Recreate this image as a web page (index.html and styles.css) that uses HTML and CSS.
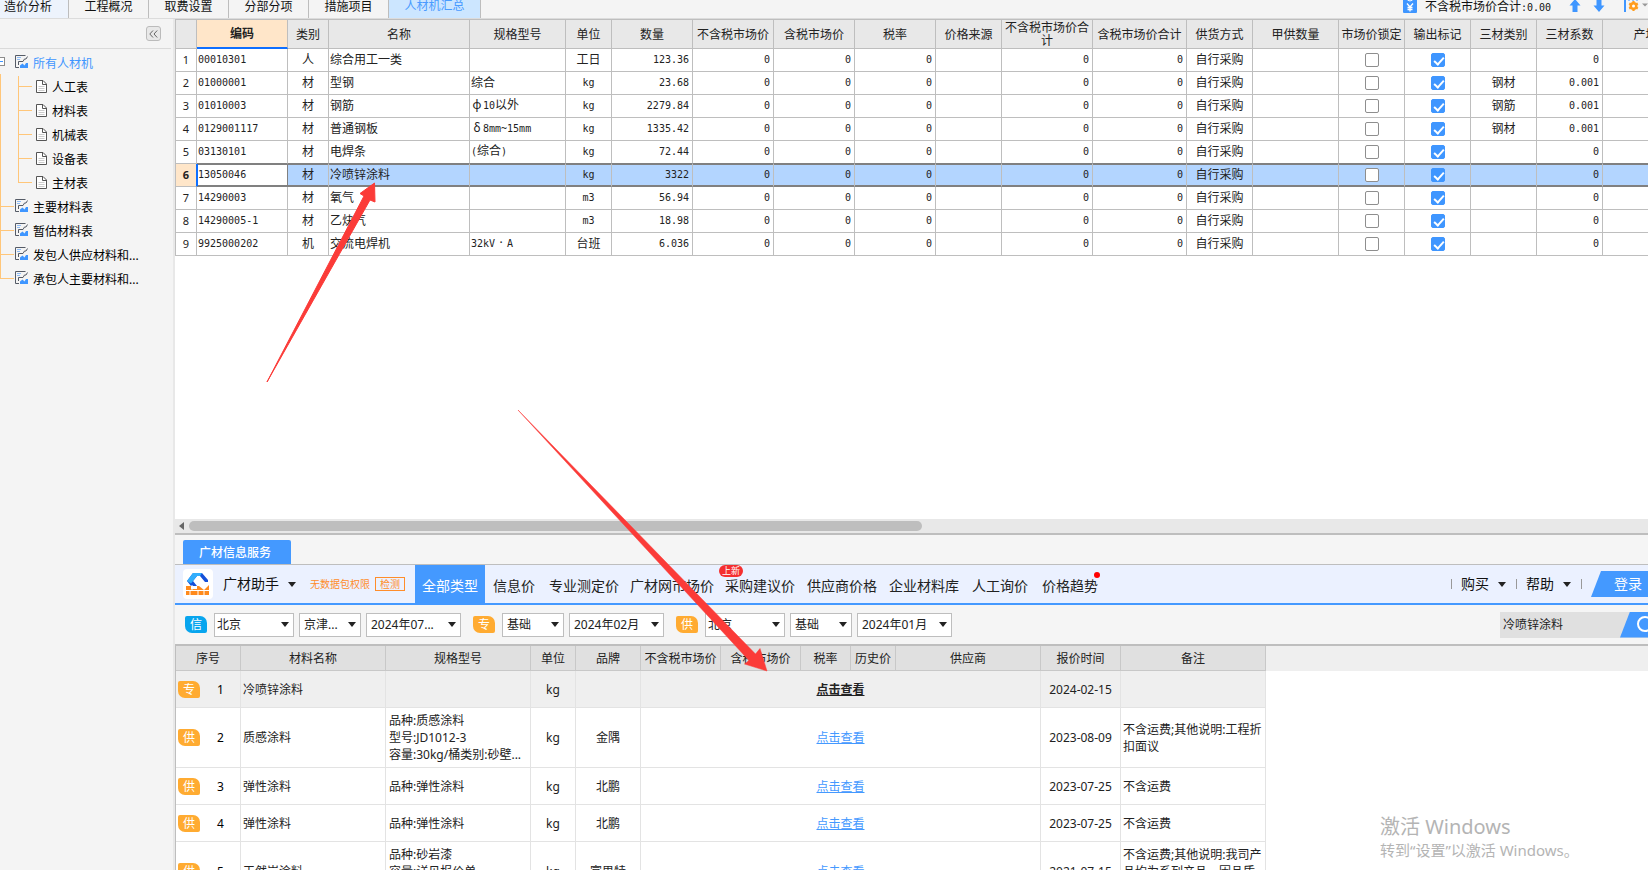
FILE: index.html
```html
<!DOCTYPE html>
<html lang="zh-CN">
<head>
<meta charset="utf-8">
<title>人材机汇总</title>
<link rel="stylesheet" href="styles.css">
</head>
<body>
<svg class="defs" width="0" height="0" aria-hidden="true">
  <symbol id="i-sheet" viewBox="0 0 14 14">
    <path d="M10.500 .5H.5V12.500H4" fill="none" stroke="#555b66"/>
    <path d="M2 2.500H6M2 4.500H5" stroke="#8fbcf5"/>
    <path d="M3.500 10V6.500H8L9.500 4H11L12.500 1.500" fill="none" stroke="#555b66"/>
    <path d="M5 13V10.500L7.500 8.500 9.500 10.500 11 8H13V13Z" fill="#3f96ff"/>
  </symbol>
  <symbol id="i-doc" viewBox="0 0 11 13">
    <path d="M.5 .5H7L10.500 4V12.500H.5Z" fill="#fff" stroke="#555"/>
    <path d="M6.500 .5V4.500H10.500" fill="none" stroke="#555"/>
    <path d="M2.500 6.500H8.500M2.500 8.500H8.500M2.500 10.500H8.500" stroke="#ccc"/>
  </symbol>
</svg>

<header class="topbar">
  <nav class="tabs">
    <button class="tab tab-first">造价分析</button>
    <button class="tab">工程概况</button>
    <button class="tab">取费设置</button>
    <button class="tab">分部分项</button>
    <button class="tab">措施项目</button>
    <button class="tab tab-active">人材机汇总</button>
  </nav>
  <div class="summary">
    <svg width="14" height="13" viewBox="0 0 14 13"><rect y="-3" width="14" height="16" rx="1" fill="#3f96ff"/><path d="M4.500 0Q7 2 9.500 0" fill="none" stroke="#fff"/><path d="M4 3.500 7 7 10 3.500M7 7V11.500M4.500 7.500H9.500M4.500 9.500H9.500" fill="none" stroke="#fff" stroke-width="1.300"/></svg>
    <span class="total">不含税市场价合计<span class="mono">:0.00</span></span>
    <button class="tool" aria-label="上移"><svg width="12" height="13" viewBox="0 0 12 13"><path d="M6-1 11.500 5.500H8.500V12H3.500V5.500H.5Z" fill="#3f96ff"/></svg></button>
    <button class="tool" aria-label="下移"><svg width="12" height="13" viewBox="0 0 12 13"><path d="M3.500 0H8.500V5.500H11.500L6 12 .5 5.500H3.500Z" fill="#3f96ff"/></svg></button>
    <button class="tool tool-set" aria-label="设置"><svg width="24" height="13" viewBox="0 0 24 13"><path d="M1 0V12" stroke="#3f96ff" stroke-width="2"/><path d="M4 0H14" stroke="#3f96ff" stroke-dasharray="2 2"/><circle cx="9.500" cy="6" r="4" fill="#ff9d1e"/><path d="M9.500 1V11M5.200 3.500 13.800 8.500M13.800 3.500 5.200 8.500" stroke="#ff9d1e" stroke-width="2.200"/><circle cx="9.500" cy="6" r="1.500" fill="#fff"/><path d="M18 3.500H24L21 6.500Z" fill="#999"/></svg></button>
  </div>
</header>

<main class="work">
<aside class="side">
  <div class="side-head"><button class="fold" aria-label="收起"><svg width="9" height="8" viewBox="0 0 9 8"><path d="M4 .5.800 4 4 7.500M8.200.5 5 4 8.200 7.500" fill="none" stroke="#666"/></svg></button></div>
  <ul class="tree">
    <li class="root open"><span class="minus"></span><a href="#" class="node current"><svg width="14" height="14"><use href="#i-sheet"/></svg>所有人材机</a>
      <ul class="kids">
        <li><a href="#" class="node"><svg width="11" height="13"><use href="#i-doc"/></svg>人工表</a></li>
        <li><a href="#" class="node"><svg width="11" height="13"><use href="#i-doc"/></svg>材料表</a></li>
        <li><a href="#" class="node"><svg width="11" height="13"><use href="#i-doc"/></svg>机械表</a></li>
        <li><a href="#" class="node"><svg width="11" height="13"><use href="#i-doc"/></svg>设备表</a></li>
        <li><a href="#" class="node"><svg width="11" height="13"><use href="#i-doc"/></svg>主材表</a></li>
      </ul>
    </li>
    <li class="root"><a href="#" class="node"><svg width="14" height="14"><use href="#i-sheet"/></svg>主要材料表</a></li>
    <li class="root"><a href="#" class="node"><svg width="14" height="14"><use href="#i-sheet"/></svg>暂估材料表</a></li>
    <li class="root"><a href="#" class="node"><svg width="14" height="14"><use href="#i-sheet"/></svg>发包人供应材料和...</a></li>
    <li class="root"><a href="#" class="node"><svg width="14" height="14"><use href="#i-sheet"/></svg>承包人主要材料和...</a></li>
  </ul>
</aside>

<div class="content">
<section class="sheet">
<table class="grid">
<colgroup><col class="w21"><col class="w91"><col class="w41"><col class="w141"><col class="w96"><col class="w46"><col class="w81"><col class="w81"><col class="w81"><col class="w81"><col class="w66"><col class="w91"><col class="w94"><col class="w66"><col class="w86"><col class="w66"><col class="w66"><col class="w66"><col class="w66"><col class="w86"></colgroup>
<thead><tr><th></th><th class="sorted">编码</th><th>类别</th><th>名称</th><th>规格型号</th><th>单位</th><th>数量</th><th>不含税市场价</th><th>含税市场价</th><th>税率</th><th>价格来源</th><th>不含税市场价合计</th><th>含税市场价合计</th><th>供货方式</th><th>甲供数量</th><th>市场价锁定</th><th>输出标记</th><th>三材类别</th><th>三材系数</th><th>产地</th></tr></thead>
<tbody>
<tr><th>1</th><td class="m">00010301</td><td class="c">人</td><td>综合用工一类</td><td></td><td class="c">工日</td><td class="n">123.36</td><td class="n">0</td><td class="n">0</td><td class="n">0</td><td></td><td class="n">0</td><td class="n">0</td><td class="c">自行采购</td><td></td><td class="c"><input type="checkbox" aria-label="市场价锁定 1"></td><td class="c"><input type="checkbox" checked aria-label="输出标记 1"></td><td class="c"></td><td class="n">0</td><td></td></tr>
<tr><th>2</th><td class="m">01000001</td><td class="c">材</td><td>型钢</td><td>综合</td><td class="c mono">kg</td><td class="n">23.68</td><td class="n">0</td><td class="n">0</td><td class="n">0</td><td></td><td class="n">0</td><td class="n">0</td><td class="c">自行采购</td><td></td><td class="c"><input type="checkbox" aria-label="市场价锁定 2"></td><td class="c"><input type="checkbox" checked aria-label="输出标记 2"></td><td class="c">钢材</td><td class="n">0.001</td><td></td></tr>
<tr><th>3</th><td class="m">01010003</td><td class="c">材</td><td>钢筋</td><td><span class="wide">ф</span><span class="mono">10</span>以外</td><td class="c mono">kg</td><td class="n">2279.84</td><td class="n">0</td><td class="n">0</td><td class="n">0</td><td></td><td class="n">0</td><td class="n">0</td><td class="c">自行采购</td><td></td><td class="c"><input type="checkbox" aria-label="市场价锁定 3"></td><td class="c"><input type="checkbox" checked aria-label="输出标记 3"></td><td class="c">钢筋</td><td class="n">0.001</td><td></td></tr>
<tr><th>4</th><td class="m">0129001117</td><td class="c">材</td><td>普通钢板</td><td><span class="wide">δ</span><span class="mono">8mm~15mm</span></td><td class="c mono">kg</td><td class="n">1335.42</td><td class="n">0</td><td class="n">0</td><td class="n">0</td><td></td><td class="n">0</td><td class="n">0</td><td class="c">自行采购</td><td></td><td class="c"><input type="checkbox" aria-label="市场价锁定 4"></td><td class="c"><input type="checkbox" checked aria-label="输出标记 4"></td><td class="c">钢材</td><td class="n">0.001</td><td></td></tr>
<tr class="before"><th>5</th><td class="m">03130101</td><td class="c">材</td><td>电焊条</td><td><span class="mono">(</span>综合<span class="mono">)</span></td><td class="c mono">kg</td><td class="n">72.44</td><td class="n">0</td><td class="n">0</td><td class="n">0</td><td></td><td class="n">0</td><td class="n">0</td><td class="c">自行采购</td><td></td><td class="c"><input type="checkbox" aria-label="市场价锁定 5"></td><td class="c"><input type="checkbox" checked aria-label="输出标记 5"></td><td class="c"></td><td class="n">0</td><td></td></tr>
<tr class="selected"><th>6</th><td class="m focus">13050046</td><td class="c">材</td><td>冷喷锌涂料</td><td></td><td class="c mono">kg</td><td class="n">3322</td><td class="n">0</td><td class="n">0</td><td class="n">0</td><td></td><td class="n">0</td><td class="n">0</td><td class="c">自行采购</td><td></td><td class="c"><input type="checkbox" aria-label="市场价锁定 6"></td><td class="c"><input type="checkbox" checked aria-label="输出标记 6"></td><td class="c"></td><td class="n">0</td><td></td></tr>
<tr><th>7</th><td class="m">14290003</td><td class="c">材</td><td>氧气</td><td></td><td class="c mono">m3</td><td class="n">56.94</td><td class="n">0</td><td class="n">0</td><td class="n">0</td><td></td><td class="n">0</td><td class="n">0</td><td class="c">自行采购</td><td></td><td class="c"><input type="checkbox" aria-label="市场价锁定 7"></td><td class="c"><input type="checkbox" checked aria-label="输出标记 7"></td><td class="c"></td><td class="n">0</td><td></td></tr>
<tr><th>8</th><td class="m">14290005-1</td><td class="c">材</td><td>乙炔气</td><td></td><td class="c mono">m3</td><td class="n">18.98</td><td class="n">0</td><td class="n">0</td><td class="n">0</td><td></td><td class="n">0</td><td class="n">0</td><td class="c">自行采购</td><td></td><td class="c"><input type="checkbox" aria-label="市场价锁定 8"></td><td class="c"><input type="checkbox" checked aria-label="输出标记 8"></td><td class="c"></td><td class="n">0</td><td></td></tr>
<tr><th>9</th><td class="m">9925000202</td><td class="c">机</td><td>交流电焊机</td><td><span class="mono">32kV</span><span class="wide">·</span><span class="mono">A</span></td><td class="c">台班</td><td class="n">6.036</td><td class="n">0</td><td class="n">0</td><td class="n">0</td><td></td><td class="n">0</td><td class="n">0</td><td class="c">自行采购</td><td></td><td class="c"><input type="checkbox" aria-label="市场价锁定 9"></td><td class="c"><input type="checkbox" checked aria-label="输出标记 9"></td><td class="c"></td><td class="n">0</td><td></td></tr>
</tbody>
</table>
</section>
<div class="scroll"><svg width="6" height="8" viewBox="0 0 6 8"><path d="M5 0V8L0 4Z" fill="#666"/></svg><div class="track"><div class="thumb"></div></div></div>

<section class="dock">
  <div class="dock-tabs"><button class="dock-tab">广材信息服务</button></div>
  <div class="bar">
    <div class="logo"><svg width="24" height="24" viewBox="0 0 24 24"><path d="M7 1H16L22 8V10H19L14 4H11L7 9 11 14H5L1 9Z" fill="#1550d8"/><path d="M7 1H16L14 4H11L5 11.500 1 9Z" fill="#31aefc"/><path d="M10 10 14 14 18 14 22 10" fill="none" stroke="#1550d8" stroke-width="0"/><path d="M0 14H5V17H11V14H13L18 18 23 13V23H0Z" fill="#ff8a1c"/><path d="M0 18.500H23M6 13V18M4 19V23M12 19V23M18 19V23" stroke="#fff"/></svg></div>
    <button class="menu brand">广材助手<i class="caret"></i></button>
    <span class="notice">无数据包权限</span>
    <button class="check">检测</button>
    <nav class="kinds">
      <a href="#" class="on">全部类型</a><a href="#">信息价</a><a href="#">专业测定价</a><a href="#">广材网市场价</a><a href="#">采购建议价<span class="badge">上新</span></a><a href="#">供应商价格</a><a href="#">企业材料库</a><a href="#">人工询价</a><a href="#">价格趋势<span class="dot"></span></a>
    </nav>
    <div class="account"><button class="menu">购买<i class="caret"></i></button><button class="menu">帮助<i class="caret"></i></button><span class="sep"></span><button class="login">登录</button></div>
  </div>
  <div class="filters">
    <span class="tag tag-blue">信</span>
    <span class="pick p80"><select aria-label="信息价地区"><option>北京</option></select></span>
    <span class="pick p62"><select aria-label="信息价类别"><option>京津...</option></select></span>
    <span class="pick p95"><select aria-label="信息价期数"><option>2024年07...</option></select></span>
    <span class="tag gap">专</span>
    <span class="pick p62"><select aria-label="测定价类别"><option>基础</option></select></span>
    <span class="pick p95"><select aria-label="测定价期数"><option>2024年02月</option></select></span>
    <span class="tag gap">供</span>
    <span class="pick p80"><select aria-label="供应商地区"><option>北京</option></select></span>
    <span class="pick p62"><select aria-label="供应商类别"><option>基础</option></select></span>
    <span class="pick p95"><select aria-label="供应商期数"><option>2024年01月</option></select></span>
    <div class="search"><input type="text" value="冷喷锌涂料" aria-label="搜索材料"><button aria-label="搜索"><svg width="20" height="20" viewBox="0 0 20 20"><circle cx="9" cy="9" r="7" fill="none" stroke="#fff" stroke-width="2"/><path d="m14 14 5 5" stroke="#fff" stroke-width="2"/></svg></button></div>
  </div>
  <div class="list">
  <table class="quotes">
  <colgroup><col class="w65"><col class="w145"><col class="w145"><col class="w45"><col class="w65"><col class="w80"><col class="w80"><col class="w50"><col class="w45"><col class="w145"><col class="w80"><col class="w145"></colgroup>
  <thead><tr><th>序号</th><th>材料名称</th><th>规格型号</th><th>单位</th><th>品牌</th><th>不含税市场价</th><th>含税市场价</th><th>税率</th><th>历史价</th><th>供应商</th><th>报价时间</th><th>备注</th></tr></thead>
  <tbody>
  <tr class="low picked"><td><div class="seq"><span class="tag">专</span><b>1</b></div></td><td>冷喷锌涂料</td><td></td><td class="c">kg</td><td class="c"></td><td class="c" colspan="5"><a href="#">点击查看</a></td><td class="c">2024-02-15</td><td></td></tr>
  <tr class="high"><td><div class="seq"><span class="tag">供</span><b>2</b></div></td><td>质感涂料</td><td>品种:质感涂料<br>型号:JD1012-3<br>容量:30kg/桶类别:砂壁...</td><td class="c">kg</td><td class="c">金隅</td><td class="c" colspan="5"><a href="#">点击查看</a></td><td class="c">2023-08-09</td><td>不含运费;其他说明:工程折扣面议</td></tr>
  <tr class="low"><td><div class="seq"><span class="tag">供</span><b>3</b></div></td><td>弹性涂料</td><td>品种:弹性涂料</td><td class="c">kg</td><td class="c">北鹏</td><td class="c" colspan="5"><a href="#">点击查看</a></td><td class="c">2023-07-25</td><td>不含运费</td></tr>
  <tr class="low"><td><div class="seq"><span class="tag">供</span><b>4</b></div></td><td>弹性涂料</td><td>品种:弹性涂料</td><td class="c">kg</td><td class="c">北鹏</td><td class="c" colspan="5"><a href="#">点击查看</a></td><td class="c">2023-07-25</td><td>不含运费</td></tr>
  <tr class="high"><td><div class="seq"><span class="tag">供</span><b>5</b></div></td><td>天然岩涂料</td><td>品种:砂岩漆<br>容量:详见报价单<br>类别:涂料</td><td class="c">kg</td><td class="c">富思特</td><td class="c" colspan="5"><a href="#">点击查看</a></td><td class="c">2021-07-15</td><td>不含运费;其他说明:我司产品均为系列产品，因品质不同</td></tr>
  </tbody>
  </table>
  </div>
</section>
</div>
</main>

<svg class="arrows" width="1648" height="870" viewBox="0 0 1648 870" aria-hidden="true">
  <path d="M267 382 364 196 360 193.500 374.500 183 375 202 370 200Z" fill="#fb3b38" stroke="#fb3b38"/>
  <path d="M518 410 755.500 654 760 648.500 767 671 744.500 664 749 660.500Z" fill="#fb3b38" stroke="#fb3b38" stroke-width=".5"/>
</svg>
<div class="watermark"><p class="wm-title">激活 Windows</p><p class="wm-sub">转到“设置”以激活 Windows。</p></div>
</body>
</html>
```
FILE: styles.css
```css
* { box-sizing: border-box; }
body {
  margin: 0; height: 100vh; overflow: hidden; position: relative;
  display: flex; flex-direction: column;
  font: 12px/16px "Noto Sans", "Noto Sans CJK SC", sans-serif;
  color: #222; background: #f4f4f4;
}
button, input, select { font: inherit; color: inherit; margin: 0; padding: 0; border: 0; background: none; border-radius: 0; }
a { color: inherit; text-decoration: none; }
ul { list-style: none; margin: 0; padding: 0; }
svg { display: block; flex: none; }
.defs, .arrows { position: absolute; }
.arrows { left: 0; top: 0; pointer-events: none; }
.mono { font-family: "DejaVu Sans Mono", monospace; font-size: 10px; }

/* top bar */
.topbar { display: flex; justify-content: space-between; height: 19px; flex: none; border-bottom: 1px solid #dcdcdc; overflow: hidden; }
.tabs { display: flex; }
.tab { width: 80px; height: 18px; line-height: 14px; padding-bottom: 4px; border-right: 1px solid #bdbdbd; color: #111; flex: none; }
.tab-first { width: 81px; margin-left: -12px; background: #edf3fc; }
.tab-active { width: 92px; background: #cce6ff; color: #4a9bff; padding-bottom: 6px; line-height: 12px; }
.summary { display: flex; align-items: flex-start; }
.total { margin: 0 18px 0 8px; line-height: 13px; color: #111; white-space: nowrap; }
.tool { margin-right: 12px; height: 13px; }
.tool-set { margin: 0 0 0 7px; }

.work { flex: 1; min-height: 0; display: flex; }

/* tree */
.side { width: 175px; flex: none; border-right: 2px solid #e8e8e8; }
.side-head { height: 30px; margin-right: 2px; border-bottom: 1px solid #dadada; display: flex; justify-content: flex-end; padding: 7px 10px 0 0; }
.fold { width: 15px; height: 15px; border: 1px solid #bbb; border-radius: 3px; background: #e8e8e8; display: flex; align-items: center; justify-content: center; }
.tree { padding-top: 3px; }
.node { display: flex; align-items: center; height: 24px; gap: 4px; color: #000; white-space: nowrap; }
.node svg { margin-bottom: 4px; }
.current { color: #3f96ff; }
.root { position: relative; padding-left: 15px; }
.root::before { content: ""; position: absolute; left: 0; top: 0; width: 13px; height: 10px; border-left: 1px solid #ffc679; border-bottom: 1px solid #ffc679; }
.root::after { content: ""; position: absolute; left: 0; top: 0; height: 24px; border-left: 1px solid #ffc679; }
.root:last-child::after { height: 10px; }
.open::before { display: none; }
.open::after { top: 22px; height: auto; bottom: 0; }
.minus { position: absolute; left: -4px; top: 5px; width: 9px; height: 9px; border: 1px solid #8c8c8c; background: linear-gradient(#3f96ff, #3f96ff) center / 5px 1px no-repeat #fff; }
.kids li { position: relative; padding-left: 21px; }
.kids .node { gap: 5px; }
.kids li::before { content: ""; position: absolute; left: 3px; top: 0; width: 13px; height: 10px; border-left: 1px solid #ffc679; border-bottom: 1px solid #ffc679; }
.kids li:not(:last-child)::after { content: ""; position: absolute; left: 3px; top: 0; height: 24px; border-left: 1px solid #ffc679; }

/* main sheet */
.content { flex: 1; min-width: 0; display: flex; flex-direction: column; }
.sheet { flex: 1; min-height: 0; overflow: hidden; background: #fff; }
table { border-collapse: separate; border-spacing: 0; table-layout: fixed; }
.grid { width: 1514px; border-left: 1px solid #bebebe; border-top: 1px solid #bebebe; }
.grid th, .grid td { border-right: 1px solid #bebebe; border-bottom: 1px solid #bebebe; height: 23px; padding: 0 1px 1px; line-height: 14px; font-weight: 400; text-align: left; overflow: hidden; white-space: nowrap; }
.grid thead th { height: 29px; background: #e8e8e8; text-align: center; white-space: normal; line-height: 13px; padding: 0 1px; }
.grid thead .sorted { background: #ffe6c9; font-weight: 700; border-bottom: 2px solid #0f6fff; }
.grid tbody th { font-size: 11px; text-align: center; padding: 0; }
.grid .c { text-align: center; }
.grid .m, .grid .n { font-family: "DejaVu Sans Mono", monospace; font-size: 10px; }
.grid .n { text-align: right; padding-right: 3px; }
.wide { display: inline-block; width: 12px; text-align: center; }
.grid .before td, .grid .selected td { border-bottom-color: #808080; }
.grid .selected td { background: #b3d5ff; box-shadow: inset 0 1px #808080, inset 0 -1px #808080; }
.grid .selected th { background: #ffe6c9; font-weight: 700; border-right-color: #0f6fff; }
.grid .selected .focus { background: #fff; border-right-color: #808080; box-shadow: inset 1px 0 #0f6fff, inset 0 1px #808080, inset 0 -1px #808080; }
.grid input { appearance: none; display: block; width: 14px; height: 14px; margin: 1px auto 0; border: 1px solid #8e8e8e; border-radius: 2px; background: #fff; position: relative; }
.grid input:checked { background: #3f96ff; border-color: #3f96ff; }
.grid input:checked::after { content: ""; position: absolute; left: 4px; top: 1px; width: 4px; height: 8px; border: solid #fff; border-width: 0 2px 2px 0; transform: rotate(42deg); }

.w21 { width: 21px; } .w41 { width: 41px; } .w45 { width: 45px; } .w46 { width: 46px; } .w50 { width: 50px; }
.w65 { width: 65px; } .w66 { width: 66px; } .w80 { width: 80px; } .w81 { width: 81px; } .w86 { width: 86px; }
.w91 { width: 91px; } .w94 { width: 94px; } .w96 { width: 96px; } .w141 { width: 141px; } .w145 { width: 145px; }

.scroll { height: 14px; flex: none; display: flex; align-items: center; background: #e8e8e8; padding-left: 4px; gap: 4px; }
.track { flex: 1; }
.thumb { width: 50%; min-width: 733px; height: 10px; border-radius: 5px; background: #bebebe; }

/* docked pane */
.dock { flex: 0 0 337px; min-height: 0; overflow: hidden; border-top: 2px solid #bebebe; background: #f5f5f5; display: flex; flex-direction: column; }
.dock-tabs { flex: none; padding: 5px 8px 0; border-bottom: 1px solid #bebebe; }
.dock-tab { display: block; width: 108px; height: 24px; background: #4499ff; color: #fff; font-weight: 500; border-radius: 2px 2px 0 0; padding: 2px 4px 0 0; }
.bar { flex: none; display: flex; align-items: center; height: 40px; background: #ebf1ff; border-bottom: 2px solid #4499ff; padding-left: 8px; font-size: 14px; line-height: 20px; color: #111; white-space: nowrap; }
.logo { width: 30px; height: 30px; border-radius: 4px; background: #fff; display: flex; align-items: center; justify-content: center; flex: none; }
.menu { display: flex; align-items: center; gap: 9px; }
.brand { margin-left: 10px; }
.caret { border: 4px solid transparent; border-top: 5px solid #222; border-bottom: 0; }
.notice { margin-left: 14px; font-size: 10px; color: #ff8d2b; }
.check { margin-left: 5px; width: 30px; height: 14px; border: 1px solid #ff8d2b; color: #ff8d2b; font-size: 10px; line-height: 12px; }
.kinds { margin-left: 10px; display: grid; grid-template-columns: 70px 58px 82px 94px 82px 82px 82px 70px 70px; align-self: stretch; color: #222; }
.kinds a { position: relative; text-align: center; line-height: 38px; padding-top: 2px; height: 38px; }
.kinds .on { background: #4499ff; color: #fff; }
.kinds .badge { position: absolute; left: 0; top: 0; width: 24px; height: 12px; border-radius: 6px; background: #f52f2f; color: #fff; font-size: 9px; line-height: 12px; }
.dot { position: absolute; right: 5px; top: 7px; width: 6px; height: 6px; border-radius: 50%; background: #f00; }
.account { margin-left: auto; display: flex; align-items: center; }
.account .menu::before, .sep::before { content: ""; height: 10px; border-left: 1px solid #999; }
.account .menu { margin-right: 10px; }
.sep { display: flex; }
.login { width: 57px; height: 26px; margin-left: 9px; background: #4499ff; color: #fff; padding-left: 17px; clip-path: polygon(10px 0, 100% 0, 100% 100%, 0 100%); }
.filters { flex: none; display: flex; align-items: center; gap: 5px; height: 39px; padding-left: 10px; }
.tag { flex: none; width: 22px; height: 17px; border-radius: 2px 7px 2px 7px; background: #ffab31; color: #fff; text-align: center; line-height: 17px; }
.filters .tag { margin-right: 2px; }
.filters .gap { margin-left: 7px; }
.tag-blue { background: #08a5ee; }
.pick { position: relative; flex: none; height: 24px; border: 1px solid #bebebe; background: #fff; }
.pick select { appearance: none; width: 100%; height: 22px; padding-left: 4px; display: block; outline: 0; }
.p80 select { padding-left: 2px; }
.pick::after { content: ""; position: absolute; right: 4px; top: 8px; border: 4px solid transparent; border-top: 5px solid #222; border-bottom: 0; pointer-events: none; }
.p80 { width: 80px; } .p62 { width: 62px; } .p95 { width: 95px; }
.search { margin-left: auto; width: 148px; height: 26px; display: flex; overflow: hidden; background: #e0e0e0; }
.search input { flex: 1; min-width: 0; padding-left: 3px; }
.search button { width: 28px; flex: none; background: #4499ff; padding-left: 16px; clip-path: polygon(10px 0, 100% 0, 100% 100%, 0 100%); }

.list { flex: 1; min-height: 0; overflow: hidden; background: linear-gradient(#efefef, #efefef) top / 100% 25px no-repeat #fff; border-top: 2px solid #bebebe; }
.quotes { width: 1091px; border-left: 1px solid #bebebe; }
.quotes th { height: 25px; background: #e0e0e0; font-weight: 400; padding: 1px 0 0; border-right: 1px solid #c8c8c8; border-bottom: 1px solid #c8c8c8; white-space: nowrap; }
.quotes td { border-right: 1px solid #e3e3e3; border-bottom: 1px solid #e3e3e3; padding: 0 2px; line-height: 17px; overflow: hidden; }
.quotes td:nth-child(3) { padding-left: 3px; }
.quotes .c { text-align: center; padding: 0; }
.quotes .low td { height: 37px; }
.quotes .high td { height: 60px; }
.quotes .picked td { background: #efefef; }
.quotes a { color: #4499ff; text-decoration: underline; }
.quotes .picked a { color: #222; font-weight: 700; }
.seq { display: flex; align-items: center; gap: 17px; }
.seq b { font-weight: 400; color: #000; }

.watermark { position: absolute; left: 1380px; top: 814px; color: #b4b4b4; white-space: nowrap; }
.watermark p { margin: 0; }
.wm-title { font-size: 20px; line-height: 26px; }
.wm-sub { font-size: 15px; line-height: 21px; }
```
